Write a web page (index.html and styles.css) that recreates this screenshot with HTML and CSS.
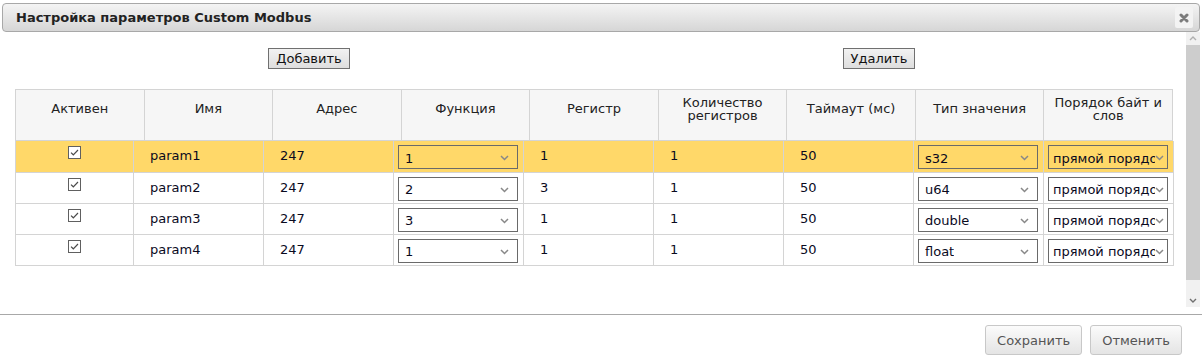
FILE: index.html
```html
<!DOCTYPE html>
<html lang="ru">
  <head>
    <meta charset="UTF-8" />
    <title>Настройка параметров Custom Modbus</title>
    <link rel="stylesheet" href="styles.css">
  </head>
  <body>
    <div class="dialog">
      <div class="titlebar">
        <span class="title">Настройка параметров Custom Modbus</span>
        <span class="close-btn">
          <svg width="10" height="10" viewBox="0 0 10 10"><path d="M2 2 L8 8 M8 2 L2 8" stroke="#7c7c7c" stroke-width="3" stroke-linecap="round"/></svg>
        </span>
      </div>

      <div class="body">
        <div class="main">
          <div class="toolbar">
            <button class="tool-btn">Добавить</button>
            <button class="tool-btn">Удалить</button>
          </div>

          <table class="grid-head">
            <tr>
              <th>Активен</th>
              <th>Имя</th>
              <th>Адрес</th>
              <th>Функция</th>
              <th>Регистр</th>
              <th>Количество регистров</th>
              <th>Таймаут (мс)</th>
              <th>Тип значения</th>
              <th>Порядок байт и слов</th>
            </tr>
          </table>

          <table class="grid-body">
            <colgroup>
              <col class="c-first">
              <col><col><col><col><col><col><col><col>
            </colgroup>
            <tr class="selected">
              <td class="check-cell"><span class="check"><svg width="13" height="13" viewBox="0 0 13 13"><rect x="0.5" y="0.5" width="12" height="12" fill="#fff" stroke="#606060"/><path d="M3 6.6 L5.3 8.8 L10 4" fill="none" stroke="#4a4a4a" stroke-width="1.2"/></svg></span></td>
              <td>param1</td>
              <td>247</td>
              <td class="sel-cell"><div class="select"><span>1</span><svg width="9" height="6" viewBox="0 0 9 6"><path d="M1 1 L4.5 4.5 L8 1" fill="none" stroke="#888" stroke-width="1.5"/></svg></div></td>
              <td>1</td>
              <td>1</td>
              <td>50</td>
              <td class="sel-cell"><div class="select"><span>s32</span><svg width="9" height="6" viewBox="0 0 9 6"><path d="M1 1 L4.5 4.5 L8 1" fill="none" stroke="#888" stroke-width="1.5"/></svg></div></td>
              <td class="sel-cell"><div class="select narrow"><span>прямой порядок</span><svg width="9" height="6" viewBox="0 0 9 6"><path d="M1 1 L4.5 4.5 L8 1" fill="none" stroke="#888" stroke-width="1.5"/></svg></div></td>
            </tr>
            <tr>
              <td class="check-cell"><span class="check"><svg width="13" height="13" viewBox="0 0 13 13"><rect x="0.5" y="0.5" width="12" height="12" fill="#fff" stroke="#606060"/><path d="M3 6.6 L5.3 8.8 L10 4" fill="none" stroke="#4a4a4a" stroke-width="1.2"/></svg></span></td>
              <td>param2</td>
              <td>247</td>
              <td class="sel-cell"><div class="select"><span>2</span><svg width="9" height="6" viewBox="0 0 9 6"><path d="M1 1 L4.5 4.5 L8 1" fill="none" stroke="#888" stroke-width="1.5"/></svg></div></td>
              <td>3</td>
              <td>1</td>
              <td>50</td>
              <td class="sel-cell"><div class="select"><span>u64</span><svg width="9" height="6" viewBox="0 0 9 6"><path d="M1 1 L4.5 4.5 L8 1" fill="none" stroke="#888" stroke-width="1.5"/></svg></div></td>
              <td class="sel-cell"><div class="select narrow"><span>прямой порядок</span><svg width="9" height="6" viewBox="0 0 9 6"><path d="M1 1 L4.5 4.5 L8 1" fill="none" stroke="#888" stroke-width="1.5"/></svg></div></td>
            </tr>
            <tr>
              <td class="check-cell"><span class="check"><svg width="13" height="13" viewBox="0 0 13 13"><rect x="0.5" y="0.5" width="12" height="12" fill="#fff" stroke="#606060"/><path d="M3 6.6 L5.3 8.8 L10 4" fill="none" stroke="#4a4a4a" stroke-width="1.2"/></svg></span></td>
              <td>param3</td>
              <td>247</td>
              <td class="sel-cell"><div class="select"><span>3</span><svg width="9" height="6" viewBox="0 0 9 6"><path d="M1 1 L4.5 4.5 L8 1" fill="none" stroke="#888" stroke-width="1.5"/></svg></div></td>
              <td>1</td>
              <td>1</td>
              <td>50</td>
              <td class="sel-cell"><div class="select"><span>double</span><svg width="9" height="6" viewBox="0 0 9 6"><path d="M1 1 L4.5 4.5 L8 1" fill="none" stroke="#888" stroke-width="1.5"/></svg></div></td>
              <td class="sel-cell"><div class="select narrow"><span>прямой порядок</span><svg width="9" height="6" viewBox="0 0 9 6"><path d="M1 1 L4.5 4.5 L8 1" fill="none" stroke="#888" stroke-width="1.5"/></svg></div></td>
            </tr>
            <tr>
              <td class="check-cell"><span class="check"><svg width="13" height="13" viewBox="0 0 13 13"><rect x="0.5" y="0.5" width="12" height="12" fill="#fff" stroke="#606060"/><path d="M3 6.6 L5.3 8.8 L10 4" fill="none" stroke="#4a4a4a" stroke-width="1.2"/></svg></span></td>
              <td>param4</td>
              <td>247</td>
              <td class="sel-cell"><div class="select"><span>1</span><svg width="9" height="6" viewBox="0 0 9 6"><path d="M1 1 L4.5 4.5 L8 1" fill="none" stroke="#888" stroke-width="1.5"/></svg></div></td>
              <td>1</td>
              <td>1</td>
              <td>50</td>
              <td class="sel-cell"><div class="select"><span>float</span><svg width="9" height="6" viewBox="0 0 9 6"><path d="M1 1 L4.5 4.5 L8 1" fill="none" stroke="#888" stroke-width="1.5"/></svg></div></td>
              <td class="sel-cell"><div class="select narrow"><span>прямой порядок</span><svg width="9" height="6" viewBox="0 0 9 6"><path d="M1 1 L4.5 4.5 L8 1" fill="none" stroke="#888" stroke-width="1.5"/></svg></div></td>
            </tr>
          </table>
        </div>

        <!-- Scrollbar -->
        <div class="scrollbar">
          <div class="sb-arrow">
            <svg width="8" height="5" viewBox="0 0 8 5"><path d="M1 4 L4 1 L7 4" fill="none" stroke="#b0b0b0" stroke-width="1.4"/></svg>
          </div>
          <div class="sb-thumb"></div>
          <div class="sb-track"></div>
          <div class="sb-arrow">
            <svg width="8" height="5" viewBox="0 0 8 5"><path d="M1 1 L4 4 L7 1" fill="none" stroke="#707070" stroke-width="1.4"/></svg>
          </div>
        </div>
      </div>

      <div class="footer">
        <button class="dlg-btn">Сохранить</button>
        <button class="dlg-btn">Отменить</button>
      </div>
    </div>
  </body>
</html>
```

FILE: styles.css
```css
* {
  margin: 0;
  padding: 0;
  box-sizing: border-box;
}

body {
  font-family: "DejaVu Sans", Verdana, sans-serif;
  font-size: 13px;
  color: #111;
  background-color: #fff;
}

.dialog {
  width: 1202px;
  height: 360px;
  overflow: hidden;
}

/* Title bar */
.titlebar {
  height: 29px;
  margin: 3px 2px 0 2px;
  display: flex;
  align-items: center;
  justify-content: space-between;
  padding: 0 6px 0 13px;
  border: 1px solid #a8a8a8;
  border-radius: 4px;
  background: linear-gradient(#f4f4f4, #d6d6d6);
}

.title {
  font-weight: bold;
  font-size: 13px;
  color: #222;
}

.close-btn {
  width: 18px;
  height: 21px;
  display: flex;
  align-items: center;
  justify-content: center;
  background-color: #f3f3f3;
  border-radius: 2px;
}

/* Body */
.body {
  height: 282px;
  display: flex;
}

.main {
  flex: 1;
  padding: 0 12px 0 15px;
}

.toolbar {
  display: grid;
  grid-template-columns: 1fr 1fr;
  justify-items: center;
  margin: 16px 10px 0 9px;
}

.tool-btn {
  font-family: inherit;
  font-size: 13px;
  color: #111;
  height: 21px;
  padding: 0 7px;
  border: 1px solid #707070;
  border-radius: 0;
  background: linear-gradient(#f2f2f2, #dedede);
}

.grid-head,
.grid-body {
  width: 1158px;
  border-collapse: collapse;
  table-layout: fixed;
}

.grid-head {
  margin-top: 20px;
}

.grid-head th {
  height: 51px;
  padding: 3px 8px 16px;
  border: 1px solid #d4d4d4;
  background-color: #f6f6f6;
  font-weight: normal;
  font-size: 13px;
  line-height: 13px;
  color: #222;
  text-align: center;
  vertical-align: middle;
}

.grid-body col {
  width: 130px;
}

.grid-body col.c-first {
  width: 118px;
}

.grid-body td {
  height: 31px;
  padding: 7px 8px 0 16px;
  border: 1px solid #d4d4d4;
  border-top: none;
  vertical-align: top;
  white-space: nowrap;
  color: #0a0a1e;
}

.grid-body tr.selected td {
  background-color: #ffd869;
}

.grid-body td.check-cell {
  text-align: center;
  padding: 5px 0 0;
}

.check {
  display: inline-block;
  width: 13px;
  height: 13px;
}

.grid-body td.sel-cell {
  padding: 4px 5px 0 4px;
}

.select {
  width: 120px;
  height: 24px;
  display: flex;
  align-items: center;
  justify-content: space-between;
  padding: 2px 8px 0 6px;
  border: 1px solid #6a6a6a;
  overflow: hidden;
}

.select span {
  overflow: hidden;
  white-space: nowrap;
}

.select.narrow {
  padding: 2px 3px 0 4px;
}

.select svg {
  flex-shrink: 0;
}

/* Scrollbar */
.scrollbar {
  width: 15px;
  margin-right: 2px;
  height: 275px;
  display: flex;
  flex-direction: column;
}

.sb-arrow {
  height: 13px;
  display: flex;
  align-items: center;
  justify-content: center;
  background-color: #f1f1f1;
}

.sb-thumb {
  height: 235px;
  background-color: #cdcdcd;
}

.sb-track {
  flex: 1;
  background-color: #f1f1f1;
}

/* Footer */
.footer {
  border-top: 1px solid #a8a8a8;
  display: flex;
  justify-content: flex-end;
  gap: 8px;
  padding: 10px 20px 0 0;
}

.dlg-btn {
  font-family: inherit;
  font-size: 13px;
  color: #555;
  height: 30px;
  padding: 0 11px;
  border: 1px solid #c8c8c8;
  border-radius: 3px;
  background: linear-gradient(#fbfbfb, #e4e4e4);
}
```
